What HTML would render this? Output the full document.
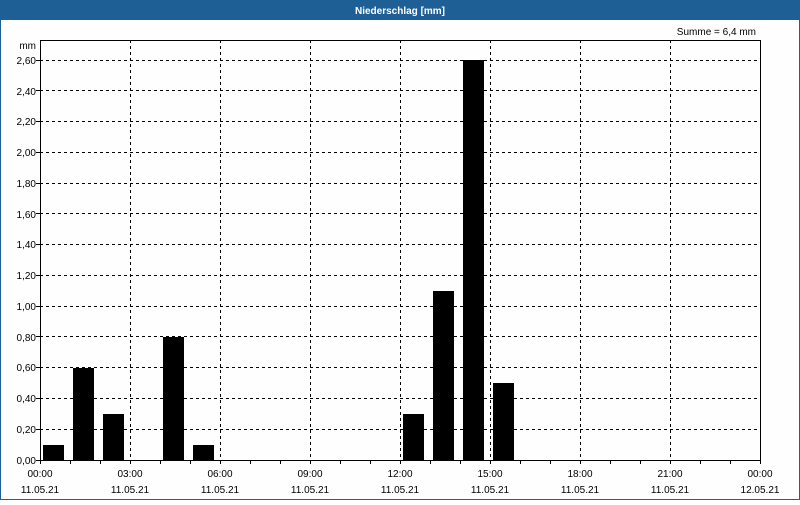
<!DOCTYPE html>
<html><head><style>
body{margin:0;width:800px;height:500px;overflow:hidden;background:#fff;font-family:"Liberation Sans",sans-serif}
</style></head><body>
<svg width="800" height="500" xmlns="http://www.w3.org/2000/svg" font-family="Liberation Sans, sans-serif" font-size="10">
<rect x="0" y="0" width="800" height="500" fill="#fdfefd"/>
<rect x="0" y="0" width="800" height="20" fill="#1e6096"/>
<rect x="0.5" y="0.5" width="799" height="499" fill="none" stroke="#1e6096"/>
<text x="400" y="14" fill="#fff" font-weight="bold" text-anchor="middle">Niederschlag [mm]</text>
<text x="756" y="35" fill="#000" text-anchor="end">Summe = 6,4 mm</text>
<text x="36" y="49" text-anchor="end" fill="#000">mm</text>
<g stroke="#000" stroke-dasharray="3,3" stroke-width="1">
<line x1="40" x2="760" y1="429.5" y2="429.5"/><line x1="40" x2="760" y1="398.5" y2="398.5"/>
<line x1="40" x2="760" y1="367.5" y2="367.5"/><line x1="40" x2="760" y1="336.5" y2="336.5"/>
<line x1="40" x2="760" y1="306.5" y2="306.5"/><line x1="40" x2="760" y1="275.5" y2="275.5"/>
<line x1="40" x2="760" y1="244.5" y2="244.5"/><line x1="40" x2="760" y1="213.5" y2="213.5"/>
<line x1="40" x2="760" y1="183.5" y2="183.5"/><line x1="40" x2="760" y1="152.5" y2="152.5"/>
<line x1="40" x2="760" y1="121.5" y2="121.5"/><line x1="40" x2="760" y1="90.5" y2="90.5"/>
<line x1="40" x2="760" y1="60.5" y2="60.5"/>
<line x1="130.5" x2="130.5" y1="40" y2="460"/><line x1="220.5" x2="220.5" y1="40" y2="460"/>
<line x1="310.5" x2="310.5" y1="40" y2="460"/><line x1="400.5" x2="400.5" y1="40" y2="460"/>
<line x1="490.5" x2="490.5" y1="40" y2="460"/><line x1="580.5" x2="580.5" y1="40" y2="460"/>
<line x1="670.5" x2="670.5" y1="40" y2="460"/>
</g>
<g fill="#000">
<rect x="43" y="445" width="21" height="15"/>
<rect x="73" y="368" width="21" height="92"/>
<rect x="103" y="414" width="21" height="46"/>
<rect x="163" y="337" width="21" height="123"/>
<rect x="193" y="445" width="21" height="15"/>
<rect x="403" y="414" width="21" height="46"/>
<rect x="433" y="291" width="21" height="169"/>
<rect x="463" y="60" width="21" height="400"/>
<rect x="493" y="383" width="21" height="77"/>
</g>
<rect x="40.5" y="40.5" width="720" height="420" fill="none" stroke="#000"/>
<g stroke="#000">
<path d="M40.5 460v4M70.5 460v4M100.5 460v4M130.5 460v4M160.5 460v4M190.5 460v4M220.5 460v4M250.5 460v4M280.5 460v4M310.5 460v4M340.5 460v4M370.5 460v4M400.5 460v4M430.5 460v4M460.5 460v4M490.5 460v4M520.5 460v4M550.5 460v4M580.5 460v4M610.5 460v4M640.5 460v4M670.5 460v4M700.5 460v4M730.5 460v4M760.5 460v4"/>
<path d="M36 460.5h4M36 429.5h4M36 398.5h4M36 367.5h4M36 336.5h4M36 306.5h4M36 275.5h4M36 244.5h4M36 213.5h4M36 183.5h4M36 152.5h4M36 121.5h4M36 90.5h4M36 60.5h4"/>
</g>
<g text-anchor="end" fill="#000">
<text x="36" y="464">0,00</text><text x="36" y="433">0,20</text><text x="36" y="402">0,40</text>
<text x="36" y="371">0,60</text><text x="36" y="341">0,80</text><text x="36" y="310">1,00</text>
<text x="36" y="279">1,20</text><text x="36" y="248">1,40</text><text x="36" y="218">1,60</text>
<text x="36" y="187">1,80</text><text x="36" y="156">2,00</text><text x="36" y="125">2,20</text>
<text x="36" y="95">2,40</text><text x="36" y="64">2,60</text>
</g>
<g text-anchor="middle" fill="#000">
<text x="40" y="477">00:00</text><text x="130" y="477">03:00</text><text x="220" y="477">06:00</text>
<text x="310" y="477">09:00</text><text x="400" y="477">12:00</text><text x="490" y="477">15:00</text>
<text x="580" y="477">18:00</text><text x="670" y="477">21:00</text><text x="760" y="477">00:00</text>
<text x="40" y="493">11.05.21</text><text x="130" y="493">11.05.21</text><text x="220" y="493">11.05.21</text>
<text x="310" y="493">11.05.21</text><text x="400" y="493">11.05.21</text><text x="490" y="493">11.05.21</text>
<text x="580" y="493">11.05.21</text><text x="670" y="493">11.05.21</text><text x="760" y="493">12.05.21</text>
</g>
</svg>
</body></html>
